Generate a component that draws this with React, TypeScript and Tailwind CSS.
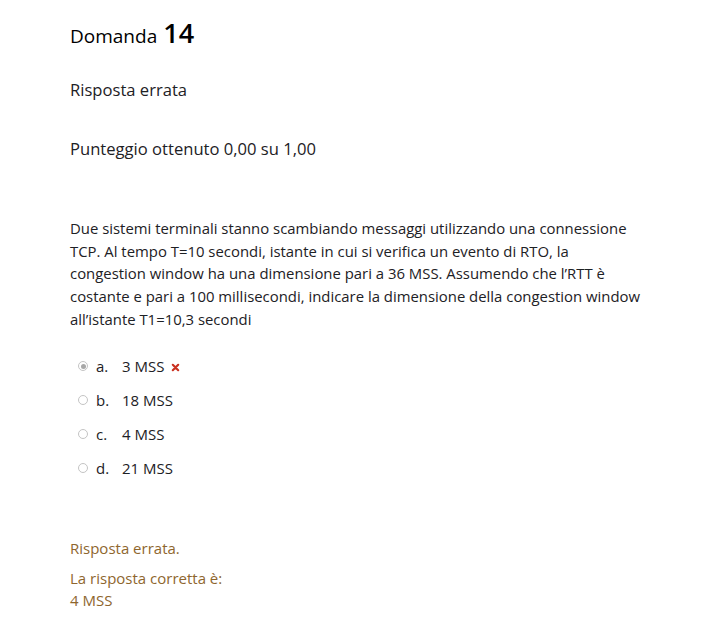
import React from 'react';

const options = [
  { letter: 'a.', text: '3 MSS', checked: true, wrong: true },
  { letter: 'b.', text: '18 MSS' },
  { letter: 'c.', text: '4 MSS' },
  { letter: 'd.', text: '21 MSS' },
];

const Radio: React.FC<{ checked?: boolean }> = ({ checked }) => (
  <span className="w-[10px] h-[10px] rounded-full border border-[#c4c4c4] bg-white flex items-center justify-center">
    {checked && <span className="w-[5px] h-[5px] rounded-full bg-[#a8a8a8]" />}
  </span>
);

const App: React.FC = () => {
  return (
    <div className="w-[717px] h-[644px] bg-white text-[#1d2125] font-['Open_Sans',sans-serif] pl-[70px]">
      <h3 className="pt-[13px] flex items-baseline gap-[6px] text-black">
        <span className="text-[19px]">Domanda</span>
        <span className="text-[27px] font-semibold">14</span>
      </h3>
      <div className="mt-[24px] text-[16.6px]">Risposta errata</div>
      <div className="mt-[35px] text-[16.6px]">Punteggio ottenuto 0,00 su 1,00</div>

      <p className="mt-[55px] w-[576px] text-[14.9px] leading-[22.6px]">
        Due sistemi terminali stanno scambiando messaggi utilizzando una connessione TCP. Al tempo T=10
        secondi, istante in cui si verifica un evento di RTO, la congestion window ha una dimensione pari a
        36 MSS. Assumendo che l’RTT è costante e pari a 100 millisecondi, indicare la dimensione della
        congestion window all’istante T1=10,3 secondi
      </p>

      <div className="mt-[25px] flex flex-col gap-[12px] pl-[8px]">
        {options.map((o) => (
          <div key={o.letter} className="flex items-center h-[22px] text-[15px]">
            <Radio checked={o.checked} />
            <span className="ml-[8px] w-[26px]">{o.letter}</span>
            <span>{o.text}</span>
            {o.wrong && (
              <svg className="ml-[7px] mt-[3px]" width="9" height="9" viewBox="0 0 10 10">
                <path d="M2 2 L8 8 M8 2 L2 8" stroke="#ca3120" strokeWidth="2.4" strokeLinecap="round" />
              </svg>
            )}
          </div>
        ))}
      </div>

      <div className="mt-[58px] text-[15px] text-[#8e662e] leading-[22px]">
        <div>Risposta errata.</div>
        <div className="mt-[8px]">La risposta corretta è:</div>
        <div>4 MSS</div>
      </div>
    </div>
  );
};

export default App;
